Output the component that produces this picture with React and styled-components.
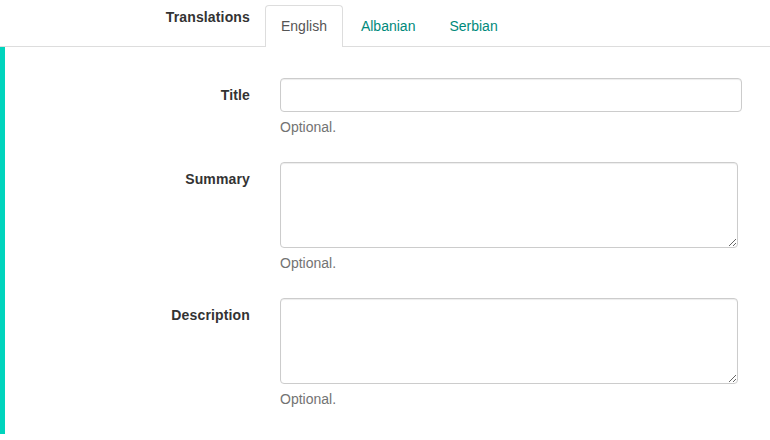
import React from "react"
import styled, { createGlobalStyle } from "styled-components"

const GlobalStyle = createGlobalStyle`
  html, body {
    margin: 0;
    padding: 0;
    background: #fff;
  }
  body {
    font-family: "Liberation Sans", Arial, sans-serif;
    font-size: 14px;
    line-height: 20px;
    color: #333;
  }
`

const TabsRow = styled.div`
  display: grid;
  grid-template-columns: 250px 1fr;
  column-gap: 15px;
  border-bottom: 1px solid #ddd;
  height: 46px;
`

const Label = styled.label`
  display: block;
  text-align: right;
  font-weight: bold;
  letter-spacing: 0.15px;
  padding-top: 7px;
  line-height: 20px;
`

const Tabs = styled.ul`
  display: flex;
  list-style: none;
  margin: 5px 0 0;
  padding: 0;
`

const Tab = styled.li`
  padding: 10px 15px;
  line-height: 20px;
  height: 21px;
  border: 1px solid ${({ $active }) => ($active ? "#ddd" : "transparent")};
  border-bottom: none;
  border-radius: 4px 4px 0 0;
  background: ${({ $active }) => ($active ? "#fff" : "transparent")};
  color: ${({ $active }) => ($active ? "#555" : "#00897b")};
  margin-right: 2px;
  cursor: pointer;
`

const Panel = styled.div`
  border-left: 5px solid #00d4bd;
  padding: 31px 0 0;
  height: 387px;
  box-sizing: border-box;
`

const FormGroup = styled.div`
  display: grid;
  grid-template-columns: 245px 1fr;
  column-gap: 30px;
  margin-bottom: 15px;
`

const Control = styled.div`
  display: flex;
  flex-direction: column;
`

const Input = styled.input`
  box-sizing: border-box;
  width: 462px;
  height: 34px;
  padding: 6px 12px;
  font: inherit;
  border: 1px solid #ccc;
  border-radius: 4px;
  box-shadow: inset 0 1px 1px rgba(0, 0, 0, 0.075);
  outline: none;
`

const TextArea = styled.textarea`
  box-sizing: border-box;
  width: 458px;
  height: 86px;
  padding: 6px 12px;
  font: inherit;
  border: 1px solid #ccc;
  border-radius: 4px;
  box-shadow: inset 0 1px 1px rgba(0, 0, 0, 0.075);
  outline: none;
  display: block;
  margin: 0;
`

const Help = styled.span`
  display: block;
  margin: 5px 0 10px;
  color: #737373;
`

const Field = ({ label, multiline }) => (
  <FormGroup>
    <Label>{label}</Label>
    <Control>
      {multiline ? <TextArea /> : <Input type="text" />}
      <Help>Optional.</Help>
    </Control>
  </FormGroup>
)

const App = () => {
  return (
    <>
      <GlobalStyle />
      <TabsRow>
        <Label>Translations</Label>
        <Tabs>
          <Tab $active>English</Tab>
          <Tab>Albanian</Tab>
          <Tab>Serbian</Tab>
        </Tabs>
      </TabsRow>
      <Panel>
        <Field label="Title" />
        <Field label="Summary" multiline />
        <Field label="Description" multiline />
      </Panel>
    </>
  )
}

export default App
